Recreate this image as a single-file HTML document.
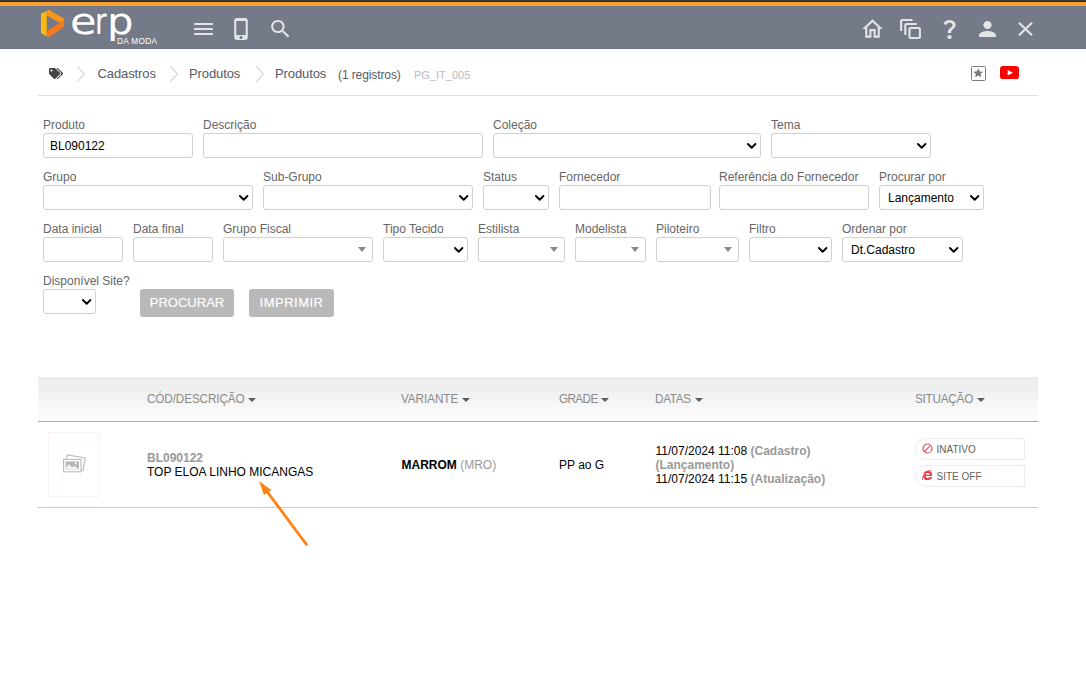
<!DOCTYPE html>
<html lang="pt-BR">
<head>
<meta charset="utf-8">
<title>Produtos</title>
<style>
*{box-sizing:border-box;margin:0;padding:0}
html,body{width:1086px;height:692px;overflow:hidden;background:#fff}
body{position:relative;font-family:"Liberation Sans",Arial,sans-serif;font-size:12px;color:#000}
.abs{position:absolute}
#topdark{left:0;top:0;width:1086px;height:2px;background:linear-gradient(#3a3a3a 50%,#2b2f38 50%)}
#toporange{left:0;top:2px;width:1086px;height:4px;background:#fb9f30}
#hdr{left:0;top:6px;width:1086px;height:43px;background:#747a88;border-top:1px solid #6e798b;border-bottom:1px solid #6b7080}
.hic{position:absolute;top:17px;width:25px;height:24px;fill:#e4e4e6}
#erp{text-rendering:geometricPrecision;left:0;top:0;width:200px;height:41.200px;overflow:hidden;font-family:"DejaVu Sans","Liberation Sans",sans-serif;font-size:36px;line-height:48px;color:#fff;white-space:nowrap}
#erp span{position:absolute;top:-2px;display:block;transform-origin:0 50%}
#damoda{left:117px;top:36px;font-size:8.300px;line-height:10px;color:#fff;white-space:nowrap;letter-spacing:.28px}
.bc{position:absolute;top:65.300px;letter-spacing:-.1px;height:18px;line-height:18px;font-size:13px;color:#555a64;white-space:nowrap}
.chev{position:absolute;top:66px;width:8px;height:16px;fill:none;stroke:#cfd0d7;stroke-width:1.100}
#bcline{left:38px;top:95px;width:1000px;height:1px;background:#e0e0e0}
.lbl{position:absolute;height:14px;line-height:14px;font-size:12px;color:#666;white-space:nowrap}
.inp{position:absolute;height:25px;border:1px solid #d0d0d0;border-radius:3px;background:#fff;font-size:12px;line-height:25px;color:#000;padding-left:6px;white-space:nowrap;overflow:hidden}
.sel{padding-left:8px}
.arr{position:absolute;width:9.400px;height:5.700px;fill:none;stroke:#000;stroke-width:2;stroke-linecap:round;stroke-linejoin:round}
.tri{position:absolute;width:0;height:0;border-left:4px solid transparent;border-right:4px solid transparent;border-top:5px solid #888}
.btn{position:absolute;top:288.500px;height:28px;background:#b9b9b9;border-radius:3px;-webkit-text-stroke:.15px #fff;color:#fff;font-size:13px;line-height:28px;text-align:center;white-space:nowrap}
#thead{left:38px;top:377px;width:1000px;height:44px;background:linear-gradient(#ebebeb,#fdfdfd)}
#theadline{left:38px;top:421px;width:1000px;height:1px;background:#f7982c}
.th{position:absolute;top:391px;height:16px;line-height:16px;font-size:13px;transform:scaleX(.9);color:#8a8a8a;white-space:nowrap;transform-origin:0 50%}
.car{position:absolute;top:397.700px;width:0;height:0;border-left:4px solid transparent;border-right:4px solid transparent;border-top:4px solid #5c5c5c;margin-left:-.3px}
.td{position:absolute;height:14px;line-height:14px;font-size:12px;white-space:nowrap}
.g{color:#999}
.b{font-weight:bold}
#rowline{left:38px;top:507px;width:1000px;height:1px;background:#ccc}
#thumb{left:48px;top:432px;width:52px;height:65px;border:1px solid #fdf3f3;background:#fff}
.badge{position:absolute;left:915px;width:110px;height:22px;border:1px solid #ededed;border-radius:11px 2px 2px 11px;background:#fff}
.badge span{position:absolute;left:20.500px;top:5px;height:12px;line-height:12px;font-size:10px;letter-spacing:0;color:#626262;white-space:nowrap}
</style>
</head>
<body>
<div id="topdark" class="abs"></div>
<div id="toporange" class="abs"></div>
<div id="hdr" class="abs"></div>

<!-- logo -->
<svg class="abs" style="left:40px;top:8px" width="26" height="31" viewBox="40 8 26 31">
  <path d="M41 14.400Q41 13.800 41.600 13.500L46.700 10.900V36.200L41.600 33.400Q41 33.100 41 32.400z" fill="#fcb912"/>
  <path d="M46.700 10.900L48.300 10.100Q49.100 9.700 49.900 10.200L63.500 18.300Q64.200 18.700 64.200 19.600V21L59.500 22.700 46.700 15.400z" fill="#f7951d"/>
  <path d="M64.200 21V26Q64.200 26.900 63.500 27.400L49.900 36.500Q49.100 37 48.300 36.700L46.700 36.200V31L59.500 22.700z" fill="#f47a20"/>
</svg>
<div id="erp" class="abs"><span style="left:69.800px;transform:translateY(.5px) scale(1.2,1.02)">e</span><span style="left:95.300px;transform:translateY(.5px) scale(.79,1.02)">r</span><span style="left:106.800px;transform:translateY(.5px) scale(1.16,1.02)">p</span></div>
<div id="damoda" class="abs">DA MODA</div>

<!-- left header icons -->
<svg class="hic" style="left:190.900px" preserveAspectRatio="none" viewBox="0 0 24 24"><path d="M3 18h18v-2H3v2zm0-5h18v-2H3v2zm0-7v2h18V6H3z"/></svg>
<svg class="hic" style="left:228.700px" preserveAspectRatio="none" viewBox="0 0 24 24"><path d="M15.5 1h-8C6.12 1 5 2.12 5 3.5v17C5 21.88 6.12 23 7.5 23h8c1.38 0 2.500-1.120 2.500-2.500v-17C18 2.120 16.880 1 15.500 1zm-4 21c-.83 0-1.500-.67-1.500-1.500s.67-1.500 1.500-1.500 1.500.67 1.500 1.500-.67 1.500-1.500 1.500zm4.500-4H7V4h9v14z"/></svg>
<svg class="hic" style="left:267.500px" preserveAspectRatio="none" viewBox="0 0 24 24"><path d="M15.5 14h-.79l-.28-.27C15.410 12.590 16 11.110 16 9.500 16 5.910 13.090 3 9.500 3S3 5.910 3 9.500 5.910 16 9.500 16c1.610 0 3.090-.59 4.230-1.570l.27.28v.79l5 4.990L20.490 19l-4.990-5zm-6 0C7.010 14 5 11.990 5 9.500S7.010 5 9.500 5 14 7.010 14 9.500 11.990 14 9.500 14z"/></svg>

<!-- right header icons -->
<svg class="hic" style="left:860.200px;top:16px;height:26px" preserveAspectRatio="none" viewBox="0 0 24 24"><path d="M12 5.690l5 4.500V18h-2v-6H9v6H7v-7.810l5-4.500M12 3L2 12h3v8h6v-6h2v6h6v-8h3L12 3z"/></svg>
<svg class="hic" style="left:898.100px" preserveAspectRatio="none" viewBox="0 0 24 24"><path d="M14 2H4c-1.110 0-2 .9-2 2v10h2V4h10V2zm4 4H8c-1.110 0-2 .9-2 2v10h2V8h10V6zm2 4h-8c-1.110 0-2 .9-2 2v8c0 1.100.89 2 2 2h8c1.100 0 2-.9 2-2v-8c0-1.100-.9-2-2-2zm0 10h-8v-8h8v8z"/></svg>
<svg class="hic" style="left:935.600px;width:27px" preserveAspectRatio="none" viewBox="0 0 24 24"><path d="M11.070 12.850c.77-1.390 2.250-2.210 3.110-3.440.91-1.290.4-3.700-2.180-3.700-1.690 0-2.520 1.280-2.870 2.340L6.540 6.960C7.250 4.830 9.180 3 11.990 3c2.350 0 3.960 1.070 4.780 2.410.7 1.150 1.110 3.300.03 4.900-1.200 1.770-2.350 2.310-2.970 3.450-.25.46-.35.76-.35 2.240h-2.890c-.01-.78-.13-2.050.48-3.150zM14 20c0 1.100-.9 2-2 2s-2-.9-2-2 .9-2 2-2 2 .9 2 2z"/></svg>
<svg class="hic" style="left:974.800px" preserveAspectRatio="none" viewBox="0 0 24 24"><path d="M12 12c2.210 0 4-1.790 4-4s-1.790-4-4-4-4 1.790-4 4 1.790 4 4 4zm0 2c-2.670 0-8 1.340-8 4v2h16v-2c0-2.660-5.330-4-8-4z"/></svg>
<svg class="hic" style="left:1013.300px" preserveAspectRatio="none" viewBox="0 0 24 24"><path d="M19 6.410L17.590 5 12 10.590 6.410 5 5 6.410 10.590 12 5 17.590 6.410 19 12 13.410 17.590 19 19 17.590 13.410 12z"/></svg>

<!-- breadcrumb -->
<svg class="abs" style="left:49px;top:67.700px" width="14" height="11" viewBox="0 0 640 512" preserveAspectRatio="none"><path fill="#444" d="M497.900 225.900L286.100 14.100A48 48 0 0 0 252.100 0H48C21.500 0 0 21.500 0 48v204.100a48 48 0 0 0 14.100 33.900l211.900 211.900c18.700 18.700 49.100 18.700 67.900 0l204.100-204.100c18.700-18.700 18.700-49.100 0-67.900zM112 160c-26.500 0-48-21.500-48-48s21.500-48 48-48 48 21.500 48 48-21.500 48-48 48zm513.900 133.800L421.800 497.900c-18.700 18.700-49.100 18.700-67.900 0l-.4-.4L527.600 323.500c17-17 26.400-39.600 26.400-63.600s-9.400-46.600-26.400-63.600L331.400 0h48.700a48 48 0 0 1 33.900 14.100l211.900 211.900c18.700 18.700 18.700 49.100 0 67.900z"/></svg>
<svg class="chev" style="left:77px" viewBox="0 0 8 16"><path d="M.5.3L7.200 8 .5 15.700"/></svg>
<div class="bc" style="left:97.500px">Cadastros</div>
<svg class="chev" style="left:169.500px" viewBox="0 0 8 16"><path d="M.5.3L7.200 8 .5 15.700"/></svg>
<div class="bc" style="left:189px">Produtos</div>
<svg class="chev" style="left:255.500px" viewBox="0 0 8 16"><path d="M.5.3L7.200 8 .5 15.700"/></svg>
<div class="bc" style="left:275px">Produtos</div>
<div class="bc" style="left:338px;font-size:12px;top:65.500px">(1 registros)</div>
<div class="bc" style="left:414px;font-size:11px;top:65.500px;color:#b9bac2;letter-spacing:0">PG_IT_005</div>
<div class="abs" style="left:971px;top:66px;width:15.200px;height:15px;border:1.700px solid #7c7c7c;border-radius:1.500px"></div>
<svg class="abs" style="left:973.300px;top:68.300px" width="10.400" height="9.600" preserveAspectRatio="none" viewBox="0 0 24 24"><path fill="#777" d="M12 1l3.300 7.700 8.200.7-6.200 5.400 1.900 8.200L12 18.600 4.800 23l1.900-8.200L.5 9.400l8.200-.7z"/></svg>
<svg class="abs" style="left:1000px;top:65.500px" width="19" height="13.500" viewBox="0 0 19 13.500"><rect width="19" height="13.500" rx="3.200" fill="#ff0000"/><path d="M7.700 4.100L13 6.750 7.700 9.400z" fill="#fff"/></svg>
<div id="bcline" class="abs"></div>

<!-- FORM -->
<div id="form">
<div class="lbl" style="left:43px;top:118px">Produto</div>
<div class="inp" style="left:43px;top:133px;width:150px">BL090122</div>
<div class="lbl" style="left:203px;top:118px">Descrição</div>
<div class="inp" style="left:203px;top:133px;width:280px"></div>
<div class="lbl" style="left:493px;top:118px">Coleção</div>
<div class="inp" style="left:493px;top:133px;width:268px"></div>
<svg class="arr" style="left:747.0px;top:142.5px;overflow:visible" viewBox="0 0 10 6"><path d="M1 1l4 4 4-4"/></svg>
<div class="lbl" style="left:771px;top:118px">Tema</div>
<div class="inp" style="left:771px;top:133px;width:160px"></div>
<svg class="arr" style="left:917.0px;top:142.5px;overflow:visible" viewBox="0 0 10 6"><path d="M1 1l4 4 4-4"/></svg>
<div class="lbl" style="left:43px;top:170px">Grupo</div>
<div class="inp" style="left:43px;top:185px;width:210px"></div>
<svg class="arr" style="left:239.0px;top:194.5px;overflow:visible" viewBox="0 0 10 6"><path d="M1 1l4 4 4-4"/></svg>
<div class="lbl" style="left:263px;top:170px">Sub-Grupo</div>
<div class="inp" style="left:263px;top:185px;width:210px"></div>
<svg class="arr" style="left:459.0px;top:194.5px;overflow:visible" viewBox="0 0 10 6"><path d="M1 1l4 4 4-4"/></svg>
<div class="lbl" style="left:483px;top:170px">Status</div>
<div class="inp" style="left:483px;top:185px;width:66px"></div>
<svg class="arr" style="left:535.0px;top:194.5px;overflow:visible" viewBox="0 0 10 6"><path d="M1 1l4 4 4-4"/></svg>
<div class="lbl" style="left:559px;top:170px">Fornecedor</div>
<div class="inp" style="left:559px;top:185px;width:152px"></div>
<div class="lbl" style="left:719px;top:170px">Referência do Fornecedor</div>
<div class="inp" style="left:719px;top:185px;width:150px"></div>
<div class="lbl" style="left:879px;top:170px">Procurar por</div>
<div class="inp sel" style="left:879px;top:185px;width:105px">Lançamento</div>
<svg class="arr" style="left:970.0px;top:194.5px;overflow:visible" viewBox="0 0 10 6"><path d="M1 1l4 4 4-4"/></svg>
<div class="lbl" style="left:43px;top:222px">Data inicial</div>
<div class="inp" style="left:43px;top:237px;width:80px"></div>
<div class="lbl" style="left:133px;top:222px">Data final</div>
<div class="inp" style="left:133px;top:237px;width:80px"></div>
<div class="lbl" style="left:223px;top:222px">Grupo Fiscal</div>
<div class="inp" style="left:223px;top:237px;width:150px"></div>
<div class="tri" style="left:358px;top:247px"></div>
<div class="lbl" style="left:383px;top:222px">Tipo Tecido</div>
<div class="inp" style="left:383px;top:237px;width:85px"></div>
<svg class="arr" style="left:454.0px;top:246.5px;overflow:visible" viewBox="0 0 10 6"><path d="M1 1l4 4 4-4"/></svg>
<div class="lbl" style="left:478px;top:222px">Estilista</div>
<div class="inp" style="left:478px;top:237px;width:87px"></div>
<div class="tri" style="left:550px;top:247px"></div>
<div class="lbl" style="left:575px;top:222px">Modelista</div>
<div class="inp" style="left:575px;top:237px;width:71px"></div>
<div class="tri" style="left:631px;top:247px"></div>
<div class="lbl" style="left:656px;top:222px">Piloteiro</div>
<div class="inp" style="left:656px;top:237px;width:83px"></div>
<div class="tri" style="left:724px;top:247px"></div>
<div class="lbl" style="left:749px;top:222px">Filtro</div>
<div class="inp" style="left:749px;top:237px;width:83px"></div>
<svg class="arr" style="left:818.0px;top:246.5px;overflow:visible" viewBox="0 0 10 6"><path d="M1 1l4 4 4-4"/></svg>
<div class="lbl" style="left:842px;top:222px">Ordenar por</div>
<div class="inp sel" style="left:842px;top:237px;width:121px">Dt.Cadastro</div>
<svg class="arr" style="left:949.0px;top:246.5px;overflow:visible" viewBox="0 0 10 6"><path d="M1 1l4 4 4-4"/></svg>
<div class="lbl" style="left:43px;top:274px">Disponível Site?</div>
<div class="inp" style="left:43px;top:289px;width:53px"></div>
<svg class="arr" style="left:82.0px;top:298.5px;overflow:visible" viewBox="0 0 10 6"><path d="M1 1l4 4 4-4"/></svg>
<div class="btn" style="left:140px;width:94px">PROCURAR</div>
<div class="btn" style="left:249px;width:85px;letter-spacing:.5px">IMPRIMIR</div>
</div><!--/form-->

<!-- TABLE -->
<div id="table">
<div id="thead" class="abs"></div><div id="theadline" class="abs"></div>
<div class="th" style="left:146.5px;letter-spacing:-0.11px">CÓD/DESCRIÇÃO</div><div class="car" style="left:248.5px"></div>
<div class="th" style="left:401.0px;letter-spacing:-0.07px">VARIANTE</div><div class="car" style="left:462.5px"></div>
<div class="th" style="left:558.5px;letter-spacing:-0.67px">GRADE</div><div class="car" style="left:601.5px"></div>
<div class="th" style="left:655.0px;letter-spacing:-0.36px">DATAS</div><div class="car" style="left:695px"></div>
<div class="th" style="left:914.5px;letter-spacing:-0.24px">SITUAÇÃO</div><div class="car" style="left:977px"></div>
<div id="thumb" class="abs"></div>
<svg class="abs" style="left:62px;top:453px" width="25" height="21" viewBox="0 0 25 21"><g fill="none" stroke="#bdbdbd" stroke-width="1.200"><path d="M4.600 6L5.300 1.900l17.900 3.100-2.200 12.600-1.800-.3"/><rect x="1.600" y="6.500" width="17.400" height="12.300" fill="#fff"/></g><rect x="3.600" y="8.500" width="13.400" height="8.300" fill="#b4b4b4"/><path d="M3.600 15.200l3.200-4.200 3.400 3.600 2-1.600 4.800 3v.8h-13.400z" fill="#f2f2f2"/><circle cx="13.800" cy="10.400" r="1.100" fill="#f2f2f2"/></svg>
<div class="td g b" style="left:147px;top:451px">BL090122</div>
<div class="td" style="left:147px;top:465px">TOP ELOA LINHO MICANGAS</div>
<div class="td" style="left:401.500px;top:458px"><span class="b">MARROM</span> <span class="g">(MRO)</span></div>
<div class="td" style="left:559px;top:458px">PP ao G</div>
<div class="td" style="left:655.500px;top:444px">11/07/2024 11:08 <span class="g b">(Cadastro)</span></div>
<div class="td g b" style="left:655.500px;top:458px">(Lançamento)</div>
<div class="td" style="left:655.500px;top:472px">11/07/2024 11:15 <span class="g b">(Atualização)</span></div>
<div class="badge" style="top:438px"><svg style="position:absolute;left:5.500px;top:3.800px" width="11" height="11" viewBox="0 0 11 11"><circle cx="5.500" cy="5.500" r="4.500" fill="none" stroke="#f04a5c" stroke-width="1.200"/><path d="M2.400 8.600L8.600 2.400" stroke="#f04a5c" stroke-width="1.200"/></svg><span>INATIVO</span></div>
<div class="badge" style="top:465px"><svg style="position:absolute;left:6px;top:4px" width="10.400" height="10.400" viewBox="0 0 512 512"><path fill="#ee3b4b" d="M483.049 159.706c10.855-24.575 21.424-60.438 21.424-87.871 0-72.722-79.641-98.371-209.673-38.577-107.632-7.181-211.221 73.67-237.098 186.457 30.852-34.862 78.271-82.298 121.977-101.158C125.404 166.85 79.128 228.002 43.992 291.725 23.246 329.651 0 390.94 0 436.747c0 98.575 92.854 86.5 180.251 42.006 31.423 15.43 66.559 15.573 101.695 15.573 97.124 0 184.249-54.294 216.814-146.022H377.927c-52.509 88.593-196.819 52.996-196.819-47.436H509.9c6.407-43.581-1.655-95.715-26.851-141.162zM64.559 346.877c17.711 51.15 53.703 95.871 100.266 123.304-88.741 48.94-173.267 29.096-100.266-123.304zm115.977-108.873c2-55.151 50.276-94.871 103.98-94.871 53.418 0 101.981 39.72 103.981 94.871H180.536zm184.536-187.6c21.425-10.287 48.563-22.003 72.558-22.003 31.422 0 54.274 21.717 54.274 53.722 0 20.003-7.427 49.007-14.569 67.867-26.28-42.292-65.986-81.584-112.263-99.586z"/></svg><span>SITE OFF</span></div>
<div id="rowline" class="abs"></div>
</div><!--/table-->

<!-- annotation arrow -->
<svg class="abs" style="left:250px;top:475px" width="70" height="80" viewBox="250 475 70 80"><line x1="306.500" y1="544.500" x2="267" y2="491.500" stroke="#ff8210" stroke-width="2.800" stroke-linecap="round"/><polygon points="259,481 271.300,490 264,495" fill="#ff8210"/></svg>
</body>
</html>
